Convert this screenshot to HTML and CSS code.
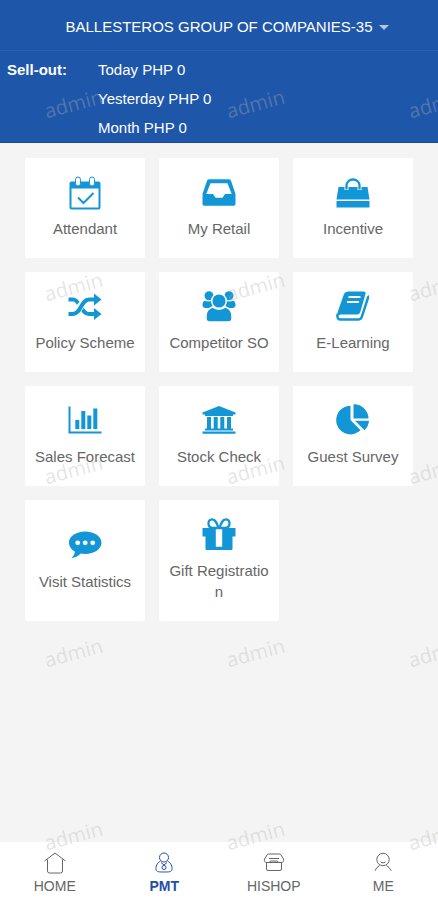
FILE: index.html
```
<!DOCTYPE html>
<html lang="en">
<head>
    <meta charset="UTF-8">
    <meta name="viewport" content="width=device-width, initial-scale=1.0">
    <title>PMT</title>
    <link rel="stylesheet" href="styles.css">
</head>
<body>

    <!-- HEADER -->
    <header class="header">
        <div class="shop-bar">
            <button type="button" class="shop-select">BALLESTEROS GROUP OF COMPANIES-35<span class="caret"></span></button>
        </div>
        <div class="sellout">
            <strong class="sellout-label">Sell-out:</strong>
            <div class="sellout-values">
                <div>Today PHP 0</div>
                <div>Yesterday PHP 0</div>
                <div>Month PHP 0</div>
            </div>
        </div>
    </header>

    <!-- MENU -->
    <main class="menu">
        <a href="#" class="menu-item">
            <svg class="menu-icon" viewBox="0 0 34 34">
                <path fill-rule="evenodd" d="M3.5 5.5h27q2 0 2 2v24q0 2-2 2h-27q-2 0-2-2v-24q0-2 2-2zM3.5 12.5v19h27v-19z"/>
                <rect class="cut-line" x="7.5" y="1" width="5" height="9" rx="2.5"/>
                <rect class="cut-line" x="21.5" y="1" width="5" height="9" rx="2.5"/>
                <path class="line" stroke-width="2" d="M10 21.5l5.500 5.500L25.500 17"/>
            </svg>
            <span>Attendant</span>
        </a>
        <a href="#" class="menu-item">
            <svg class="menu-icon" viewBox="0 0 34 34">
                <path fill-rule="evenodd" d="M7 3.300h20q1.500 0 2 1.500L33.500 18v10q0 1.700-1.700 1.700H2.200Q.5 29.700.5 28V18L5 4.800q.5-1.500 2-1.500zM8.500 7.200L4.300 18H11l2.500 3.800h7L23 18h6.700L25.500 7.200z"/>
            </svg>
            <span>My Retail</span>
        </a>
        <a href="#" class="menu-item">
            <svg class="menu-icon" viewBox="0 0 34 34">
                <path d="M2.5 11h29l2 12.500H.5zM.5 25h33v6.500H.5z"/>
                <path class="cut" stroke-width="4" d="M10.500 14V9.500a6.500 6 0 0 1 13 0V14"/>
                <path class="line" stroke-width="2.300" d="M10.500 13.500v-4a6.500 6 0 0 1 13 0v4"/>
            </svg>
            <span>Incentive</span>
        </a>
        <a href="#" class="menu-item">
            <svg class="menu-icon" viewBox="0 0 34 34">
                <path class="line" stroke-width="4" d="M.5 9.500H5c7 0 8 14.500 16 14.500h6"/>
                <path class="cut" stroke-width="7" d="M9 21.500c3-4 5-9 8.500-11"/>
                <path class="line" stroke-width="4" d="M.5 24H5C13 24 13 9.500 21 9.500h6"/>
                <path d="M26 3.500l7.500 6-7.500 6zM26 18l7.500 6-7.500 6z"/>
            </svg>
            <span>Policy Scheme</span>
        </a>
        <a href="#" class="menu-item">
            <svg class="menu-icon" viewBox="0 0 34 34">
                <circle cx="7" cy="5.800" r="4.500"/>
                <circle cx="27" cy="5.800" r="4.500"/>
                <path d="M2.500 10.800q4 1.500 8 0V18H4Q0 18 .5 14q.3-2.500 2-3.200zM31.500 10.800q-4 1.500-8 0V18H30q4 0 3.500-4-.3-2.500-2-3.200z"/>
                <path class="edged" d="M10.500 17q6.500 4.500 13 0 6.500 2 6.500 9v2.500q0 3.500-3.500 3.500h-19Q4 32 4 28.500V26q0-7 6.500-9z"/>
                <circle class="edged" cx="17" cy="11" r="7.300"/>
            </svg>
            <span>Competitor SO</span>
        </a>
        <a href="#" class="menu-item">
            <svg class="menu-icon" viewBox="0 0 34 34">
                <path d="M12 1.500h15.500q2.800 0 2 2.500l-5.200 18q-.8 2.500-3.300 2.500H5q-2.500 0-3.500 1.500-.7-1 0-3.500L8 4q.8-2.500 4-2.500z"/>
                <path class="line" stroke-width="2.500" d="M1.800 24q-1 2.500.3 4.500.7 1 2.400 1H22q3 0 3.700-2.500L31.800 8.500q.5-1.700-.3-2.500"/>
                <path class="cut" stroke-width="2" d="M12.500 7h12M11 12h12"/>
            </svg>
            <span>E-Learning</span>
        </a>
        <a href="#" class="menu-item">
            <svg class="menu-icon" viewBox="0 0 34 34">
                <path d="M.5 2.500h2v25h31v2H.5zM7.300 16h4v9h-4zM13.300 7h4v18h-4zM19.300 11.500h4V25h-4zM25.300 4.500h4V25h-4z"/>
            </svg>
            <span>Sales Forecast</span>
        </a>
        <a href="#" class="menu-item">
            <svg class="menu-icon" viewBox="0 0 34 34">
                <path d="M17 2l16.500 6.500v2H31v1.500H3v-1.500H.5v-2zM5 13h4v11.500H5zM11.700 13h4v11.500h-4zM18.300 13h4v11.500h-4zM25 13h4v11.500h-4zM3 24.500h28v2H3zM.5 27.500h33v2.200H.5z"/>
            </svg>
            <span>Stock Check</span>
        </a>
        <a href="#" class="menu-item">
            <svg class="menu-icon" viewBox="0 0 34 34">
                <path d="M14.500 1.800V16l10 10.300A14.300 14.300 0 1 1 14.500 1.800zM17.500.3A14.500 14.500 0 0 1 32.500 14.500h-15zM19 16.700h14q-.3 5.500-4.500 9.500z"/>
            </svg>
            <span>Guest Survey</span>
        </a>
        <a href="#" class="menu-item">
            <svg class="menu-icon" viewBox="0 0 34 34">
                <path d="M17.200 2.500c9.200 0 16.300 5 16.300 11.200s-7 11.200-16.300 11.200q-2.500 0-4.500-.4Q9 28.500 3.500 29q3-2.500 3.500-6.300C3.200 20.500.9 17.300.9 13.700.9 7.500 8 2.500 17.200 2.500z"/>
                <circle class="hole" cx="9.700" cy="13.800" r="2.400"/>
                <circle class="hole" cx="17.200" cy="13.800" r="2.400"/>
                <circle class="hole" cx="24.700" cy="13.800" r="2.400"/>
            </svg>
            <span>Visit Statistics</span>
        </a>
        <a href="#" class="menu-item">
            <svg class="menu-icon" viewBox="0 0 34 34">
                <path fill-rule="evenodd" d="M.5 10h33v8.500h-3V31q0 1-1 1h-25q-1 0-1-1V18.500h-3zM13.800 10.500v18.300h6.400V10.500z"/>
                <path class="line" stroke-width="2.300" d="M16.500 10h-6C5 9.500 5.500 1.500 10 1.300c3.500-.2 5 4 6.500 8.700zM17.500 10h6c5.500-.5 5-8.500.5-8.700-3.500-.2-5 4-6.500 8.700z"/>
            </svg>
            <span>Gift Registration</span>
        </a>
    </main>

    <!-- BOTTOM TABS -->
    <nav class="tabs">
        <a href="#" class="tab">
            <svg class="tab-icon" viewBox="0 0 24 24"><path d="M1.500 10L12 2l10.500 8M4.500 8.500V20q0 2 2 2h11q2 0 2-2V8.500"/></svg>
            <span>HOME</span>
        </a>
        <a href="#" class="tab active">
            <svg class="tab-icon" viewBox="0 0 24 24"><circle cx="12" cy="6.500" r="4.500"/><path d="M8.500 10C5 12 3.500 15.500 4 18.500c.5 2.500 3 2.500 8 2.500s7.500 0 8-2.500c.5-3-1-6.500-4.500-8.500M9 11.500l3 2.500 3-2.500"/><circle cx="12" cy="16.500" r="2"/></svg>
            <span>PMT</span>
        </a>
        <a href="#" class="tab">
            <svg class="tab-icon" viewBox="0 0 24 24"><path d="M6.500 3h11q1 0 1.500 1l2.500 4q.8 3.500-2.500 3.500H5Q1.700 11.500 2.500 8L5 4q.5-1 1.500-1zM7 7.500h10M7.500 11.500q0-1.500 2-1.500h5q2 0 2 1.500M4.500 12v6q0 1.500 1.500 1.500h12q1.500 0 1.500-1.500v-6"/></svg>
            <span>HISHOP</span>
        </a>
        <a href="#" class="tab">
            <svg class="tab-icon" viewBox="0 0 24 24"><circle cx="12" cy="8.500" r="6.200"/><path d="M9.500 11q2.500 1.800 5 0M8.500 14.500Q5.500 16 4 19.700M15.500 14.500q3 1.500 4.500 5.200"/></svg>
            <span>ME</span>
        </a>
    </nav>

    <!-- WATERMARK -->
    <div class="watermark" aria-hidden="true">
        <span>admin</span><span>admin</span><span>admin</span>
        <span>admin</span><span>admin</span><span>admin</span>
        <span>admin</span><span>admin</span><span>admin</span>
        <span>admin</span><span>admin</span><span>admin</span>
        <span>admin</span><span>admin</span><span>admin</span>
    </div>

</body>
</html>
```
FILE: styles.css
```
* {
    box-sizing: border-box;
}

body {
    font-family: "Liberation Sans", Arial, sans-serif;
    font-size: 15px;
    background-color: #f4f4f4;
    color: #666;
    margin: 0;
    min-height: 100vh;
    display: flex;
    flex-direction: column;
}

a {
    color: inherit;
    text-decoration: none;
}

.header {
    background-color: #1e56a9;
    border-bottom: 1px solid #164a9c;
    color: white;
}

.shop-bar {
    display: flex;
    justify-content: center;
    padding: 17px 0 13px 16px;
    border-bottom: 1px solid #2960b0;
}

.shop-select {
    display: flex;
    align-items: center;
    gap: 6px;
    padding: 0;
    border: none;
    background: none;
    color: white;
    font: inherit;
    line-height: 20px;
    white-space: nowrap;
    cursor: pointer;
}

.caret {
    border: 5px solid transparent;
    border-top-color: #b5c6e0;
    border-bottom: none;
}

.sellout {
    display: grid;
    grid-template-columns: 91px 1fr;
    padding: 4px 7px 0;
    line-height: 29px;
}

.menu {
    flex: 1;
    display: grid;
    grid-template-columns: repeat(3, 1fr);
    align-content: start;
    gap: 14px;
    padding: 15px 25px;
}

.menu-item {
    display: flex;
    flex-direction: column;
    align-items: center;
    justify-content: center;
    gap: 8px;
    padding: 18px 8px 19px;
    background: white;
    border-radius: 2px;
    line-height: 21px;
    text-align: center;
    word-break: break-all;
}

.menu-icon {
    width: 34px;
    height: 34px;
    fill: #1296d6;
}

.line {
    fill: none;
    stroke: #1296d6;
}

.cut {
    fill: none;
    stroke: white;
}

.cut-line {
    fill: white;
    stroke: #1296d6;
}

.edged {
    stroke: white;
    stroke-width: 1.5px;
}

.hole {
    fill: white;
}

.tabs {
    display: grid;
    grid-template-columns: repeat(4, 1fr);
    padding: 9px 0 4px;
    background: white;
    font-size: 14px;
    line-height: 20px;
}

.tab {
    display: flex;
    flex-direction: column;
    align-items: center;
    gap: 1px;
}

.tab-icon {
    width: 24px;
    height: 24px;
    fill: none;
    stroke: currentColor;
}

.active {
    color: #1f4fa5;
    font-weight: bold;
}

/* sits over the whole page, clicks go through */
.watermark {
    position: absolute;
    inset: 0;
    overflow: hidden;
    pointer-events: none;
    display: grid;
    grid-template-columns: repeat(3, 182px);
    grid-auto-rows: 183px;
    align-items: start;
    justify-items: start;
    padding: 92px 0 0 44px;
    font-family: "Open Sans", sans-serif;
    font-size: 20px;
    line-height: 24px;
    color: rgba(180, 180, 180, 0.35);
}

.watermark span {
    transform: rotate(-15deg);
}
```
